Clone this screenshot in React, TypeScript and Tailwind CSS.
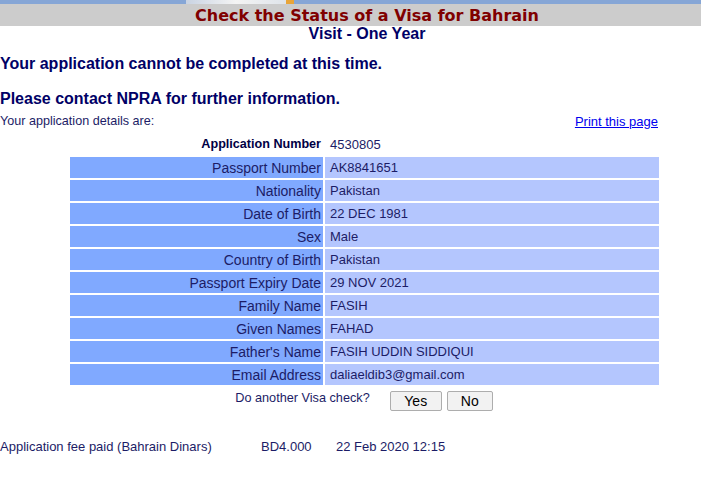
import React from 'react'

const rows: [string, string][] = [
  ['Passport Number', 'AK8841651'],
  ['Nationality', 'Pakistan'],
  ['Date of Birth', '22 DEC 1981'],
  ['Sex', 'Male'],
  ['Country of Birth', 'Pakistan'],
  ['Passport Expiry Date', '29 NOV 2021'],
  ['Family Name', 'FASIH'],
  ['Given Names', 'FAHAD'],
  ["Father's Name", 'FASIH UDDIN SIDDIQUI'],
  ['Email Address', 'daliaeldib3@gmail.com'],
]

export default function App() {
  return (
    <div className="w-[701px] h-[501px] overflow-hidden bg-white font-['Liberation_Sans',Arial,sans-serif] text-[#1c1c66]">
      <div className="w-[734px]">
        {/* banner remnant */}
        <div className="h-[4px] flex bg-[#86a6d6]">
          <div className="w-[186px]" />
          <div className="w-[100px] bg-gradient-to-r from-[#c9d3e2] via-[#f4f4f4] to-[#dfe4ea]" />
          <div className="w-[8px] bg-[#e8a53a]" />
        </div>
        <div className="h-[22px] bg-[#cccccc] flex items-center justify-center">
          <h1 className="font-['DejaVu_Sans',Verdana,sans-serif] font-bold text-[16px] leading-none text-[#800000] pt-[1px]">
            Check the Status of a Visa for Bahrain
          </h1>
        </div>
        <div className="h-[16px] flex items-center justify-center text-[16px] font-bold text-[#000066] leading-none">
          Visit - One Year
        </div>

        <p className="mt-[13px] text-[16px] font-bold text-[#000066] leading-[18px]">
          Your application cannot be completed at this time.
        </p>
        <p className="mt-[17px] text-[16px] font-bold text-[#000066] leading-[18px]">
          Please contact NPRA for further information.
        </p>

        <div className="mt-[6px] h-[14px] flex items-center justify-between w-[658px] text-[12.6px] leading-none">
          <span>Your application details are:</span>
          <a href="#" className="text-[13px] text-[#0000ee] underline">Print this page</a>
        </div>

        <table className="mt-[4px] ml-[68px] w-[593px] border-separate border-spacing-[2px] text-[13px]">
          <tbody>
            <tr className="h-[21px]">
              <td className="w-[253px] text-right pr-[2px] font-bold text-[12.6px] text-[#000044]">Application Number</td>
              <td className="pl-[5px]">4530805</td>
            </tr>
            {rows.map(([label, value]) => (
              <tr key={label} className="h-[21px]">
                <td className="bg-[#80a9ff] text-right pr-[2px] text-[14px] leading-none">{label}</td>
                <td className="bg-[#b4c6fe] pl-[5px] leading-none">{value}</td>
              </tr>
            ))}
          </tbody>
        </table>

        <div className="mt-[4px] flex items-center justify-center gap-[20px] w-[728px]">
          <span className="text-[12.7px] -mt-[5px]">Do another Visa check?</span>
          <div className="flex gap-[5px]">
            <button className="w-[52px] h-[20px] bg-[#f2f2f2] border border-[#adadad] rounded-[2px] text-[14px] text-black leading-none">Yes</button>
            <button className="w-[46px] h-[20px] bg-[#f2f2f2] border border-[#adadad] rounded-[2px] text-[14px] text-black leading-none">No</button>
          </div>
        </div>

        <div className="mt-[28px] flex text-[13px] leading-[15px]">
          <span className="w-[261px]">Application fee paid (Bahrain Dinars)</span>
          <span className="w-[75px]">BD4.000</span>
          <span>22 Feb 2020 12:15</span>
        </div>
      </div>
    </div>
  )
}
